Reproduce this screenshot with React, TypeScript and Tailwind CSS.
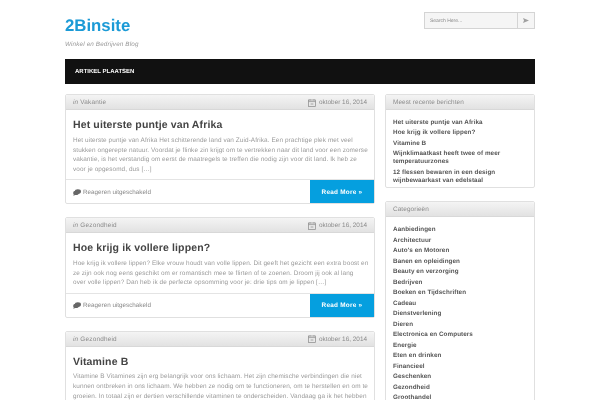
import React from 'react';

const posts = [
  {
    cat: 'Vakantie',
    title: 'Het uiterste puntje van Afrika',
    lines: [
      'Het uiterste puntje van Afrika Het schitterende land van Zuid-Afrika. Een prachtige plek met veel',
      'stukken ongerepte natuur. Voordat je flinke zin krijgt om te vertrekken naar dit land voor een zomerse',
      'vakantie, is het verstandig om eerst de maatregels te treffen die nodig zijn voor dit land. Ik heb ze',
      'voor je opgesomd, dus […]',
    ],
  },
  {
    cat: 'Gezondheid',
    title: 'Hoe krijg ik vollere lippen?',
    lines: [
      'Hoe krijg ik vollere lippen? Elke vrouw houdt van volle lippen. Dit geeft het gezicht een extra boost en',
      'ze zijn ook nog eens geschikt om er romantisch mee te flirten of te zoenen. Droom jij ook al lang',
      'over volle lippen? Dan heb ik de perfecte opsomming voor je: drie tips om je lippen […]',
    ],
  },
  {
    cat: 'Gezondheid',
    title: 'Vitamine B',
    lines: [
      'Vitamine B Vitamines zijn erg belangrijk voor ons lichaam. Het zijn chemische verbindingen die niet',
      'kunnen ontbreken in ons lichaam. We hebben ze nodig om te functioneren, om te herstellen en om te',
      'groeien. In totaal zijn er dertien verschillende vitaminen te onderscheiden. Vandaag ga ik het hebben',
    ],
  },
];

const recent = [
  ['Het uiterste puntje van Afrika'],
  ['Hoe krijg ik vollere lippen?'],
  ['Vitamine B'],
  ['Wijnklimaatkast heeft twee of meer', 'temperatuurzones'],
  ['12 flessen bewaren in een design', 'wijnbewaarkast van edelstaal'],
];

const categories = [
  'Aanbiedingen', 'Architectuur', "Auto's en Motoren", 'Banen en opleidingen', 'Beauty en verzorging',
  'Bedrijven', 'Boeken en Tijdschriften', 'Cadeau', 'Dienstverlening', 'Dieren', 'Electronica en Computers',
  'Energie', 'Eten en drinken', 'Financieel', 'Geschenken', 'Gezondheid', 'Groothandel',
];

function CalendarIcon() {
  return (
    <svg width="8" height="8" viewBox="0 0 8 8" fill="none" stroke="#888" strokeWidth="0.7" className="mr-[3px]">
      <rect x="0.5" y="1" width="7" height="6.6" />
      <path d="M0.5 2.6h7M2 0.2v1.3M6 0.2v1.3M2.6 5h2.8" />
    </svg>
  );
}

function CommentIcon() {
  return (
    <svg width="8" height="7" viewBox="0 0 8 7" fill="#666" className="mr-[2px]">
      <ellipse cx="4.9" cy="2.6" rx="3.1" ry="2.3" />
      <ellipse cx="3" cy="3.9" rx="2.8" ry="2.1" />
      <path d="M1 5l-0.8 1.8 2.2-0.9z" />
    </svg>
  );
}

function PanelHead({ children }: { children: React.ReactNode }) {
  return (
    <div className="h-[15px] pt-[2px] flex items-center justify-between px-[7px] border-b border-[#d8d8d8] bg-gradient-to-b from-[#f4f4f4] to-[#e2e2e2] rounded-t-[2px] text-[6.4px] tracking-[0.1px] text-[#8a8a8a]">
      {children}
    </div>
  );
}

export default function App() {
  return (
    <div className="w-[600px] h-[400px] overflow-hidden will-change-transform [text-rendering:geometricPrecision] font-['Liberation_Sans',Arial,sans-serif]">
      <div className="w-[470px] mx-auto">
        {/* Header */}
        <div className="h-[59px] flex justify-between items-start">
          <div>
            <div className="mt-[15px] text-[16.8px] leading-[22px] font-bold text-[#1b9ad6]">2Binsite</div>
            <div className="mt-[3.5px] text-[6.3px] leading-[8px] italic tracking-[0.15px] text-[#999]">Winkel en Bedrijven Blog</div>
          </div>
          <div className="mt-[12px] w-[111px] h-[17px] flex border border-[#d4d4d4] bg-[#f5f5f5]">
            <div className="flex-1 flex items-center pl-[5px] pt-[2px] text-[5px] text-[#888]">Search Here...</div>
            <div className="w-[17px] flex items-center justify-center border-l border-[#d4d4d4]">
              <svg width="6" height="5" viewBox="0 0 6 5" fill="#a0a0a0">
                <path d="M0 0l6 2.5L0 5l1-2.5z" />
              </svg>
            </div>
          </div>
        </div>

        {/* Nav */}
        <div className="h-[25px] pt-[2px] bg-[#111111] flex items-center pl-[10px] text-[6px] font-bold text-white">
          ARTIKEL PLAATSEN
        </div>

        <div className="mt-[10px] flex gap-[10px] items-start">
          {/* Posts */}
          <div className="w-[310px] flex flex-col gap-[13px]">
            {posts.map((post, i) => (
              <div key={i} className="border border-[#e0e0e0] rounded-[2px]">
                <PanelHead>
                  <span className="tracking-[0.2px]"><i>in</i> {post.cat}</span>
                  <span className="flex items-center tracking-normal"><CalendarIcon />oktober 16, 2014</span>
                </PanelHead>
                <div className="pl-[7px] pt-[7.3px] pb-[4.7px] border-b border-[#e4e4e4]">
                  <h2 className="text-[10.5px] leading-[16px] font-bold tracking-[0.13px] text-[#444]">{post.title}</h2>
                  <div className="mt-[2.7px] text-[6.4px] leading-[9.6px] tracking-[0.09px] text-[#9a9a9a] whitespace-nowrap">
                    {post.lines.map((l) => <div key={l}>{l}</div>)}
                  </div>
                </div>
                <div className="h-[23px] flex items-center justify-between pl-[7px]">
                  <span className="flex items-center pt-[1.5px] text-[6.3px] tracking-normal text-[#888]">
                    <CommentIcon />Reageren uitgeschakeld
                  </span>
                  <a className="w-[64px] h-[23px] pt-[2px] flex items-center justify-center bg-[#059fdf] text-white text-[6.4px] font-bold tracking-[0.25px]">
                    Read More »
                  </a>
                </div>
              </div>
            ))}
          </div>

          {/* Sidebar */}
          <div className="w-[150px] flex flex-col gap-[13px]">
            <div className="border border-[#e0e0e0] rounded-[2px]">
              <PanelHead>Meest recente berichten</PanelHead>
              <div className="px-[7px] pt-[9px] pb-[2.2px] flex flex-col gap-[2.4px] text-[6.3px] leading-[8px] font-bold tracking-[0.08px] text-[#555]">
                {recent.map((r) => (
                  <div key={r[0]}>{r.map((l) => <div key={l}>{l}</div>)}</div>
                ))}
              </div>
            </div>
            <div className="border border-[#e0e0e0] rounded-[2px]">
              <PanelHead>Categorieën</PanelHead>
              <div className="px-[7px] pt-[8.5px] flex flex-col text-[6.3px] leading-[10.48px] font-bold tracking-[0.08px] text-[#555]">
                {categories.map((c) => <div key={c}>{c}</div>)}
              </div>
            </div>
          </div>
        </div>
      </div>
    </div>
  );
}
